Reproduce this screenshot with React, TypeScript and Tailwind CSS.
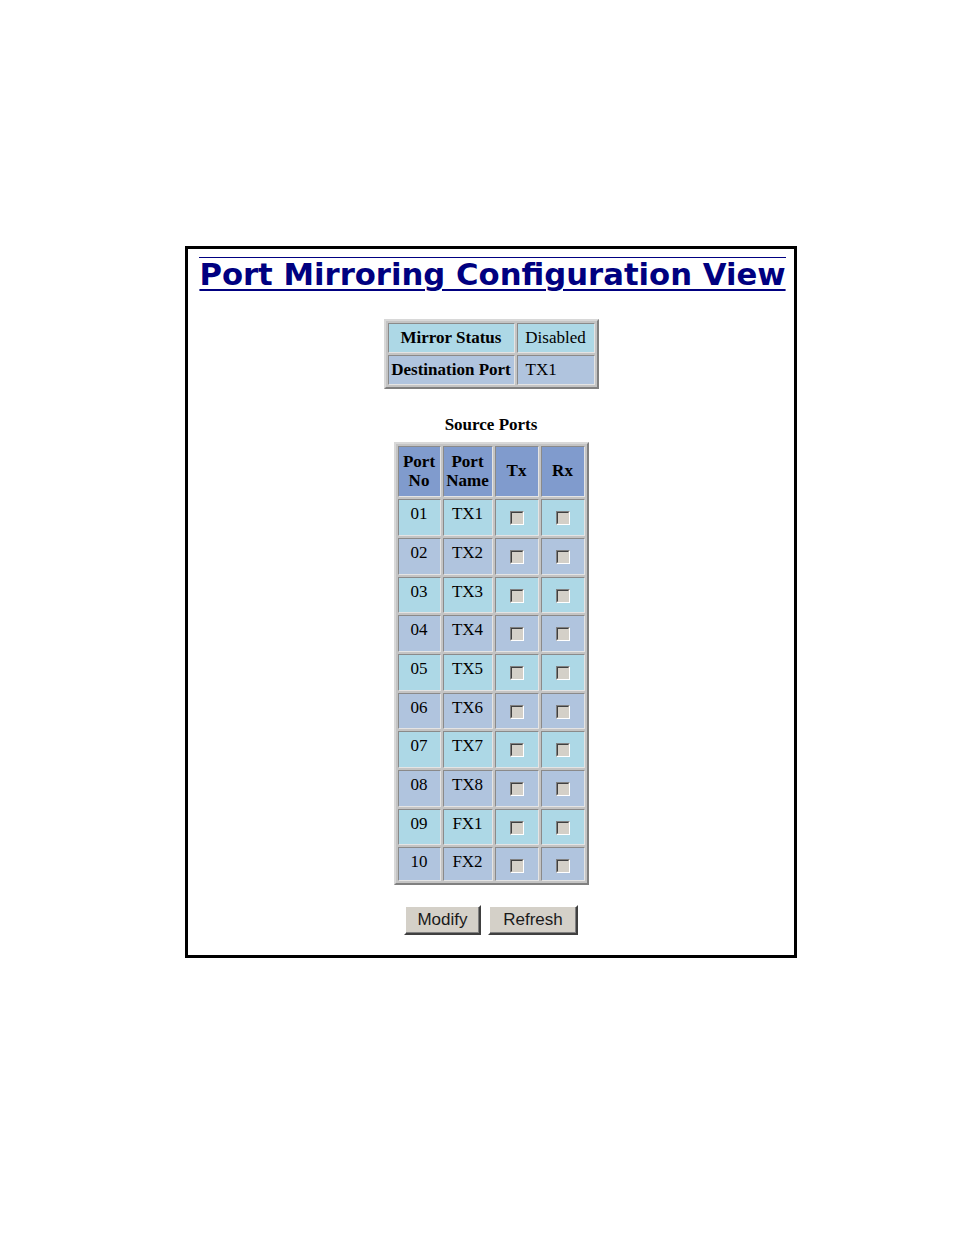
import React from "react";

const serif = { fontFamily: '"Liberation Serif", "Times New Roman", serif' };

function Check() {
  return (
    <span className="inline-block w-[14px] h-[14px] border border-t-[#808080] border-l-[#808080] border-b-white border-r-white align-middle">
      <span className="block w-full h-full border border-t-[#404040] border-l-[#404040] border-b-[#d4d0c8] border-r-[#d4d0c8] bg-[#d4d0c8]" />
    </span>
  );
}

const ports = [
  ["01", "TX1"],
  ["02", "TX2"],
  ["03", "TX3"],
  ["04", "TX4"],
  ["05", "TX5"],
  ["06", "TX6"],
  ["07", "TX7"],
  ["08", "TX8"],
  ["09", "FX1"],
  ["10", "FX2"],
];

const td = "p-0 border border-t-[#8a8a8a] border-l-[#8a8a8a] border-b-[#e4e4e4] border-r-[#e4e4e4]";

export default function App() {
  return (
    <div className="w-[954px] h-[1235px] bg-white pt-[246px] pl-[185px]">
      <div className="w-[612px] h-[712px] border-[3px] border-black flex flex-col items-center">
        <div className="mt-[8px] ml-[3px] border-t border-[#000080] pt-[2px]">
          <div
            className="text-[30.7px] leading-none font-bold text-[#000080] underline decoration-[1.5px] underline-offset-[4px] whitespace-nowrap"
            style={{ fontFamily: '"DejaVu Sans", Verdana, sans-serif' }}
          >
            Port Mirroring Configuration View
          </div>
        </div>

        <table
          className="mt-[28px] border-separate border-spacing-0.5 border-2 border-t-[#d8d8d8] border-l-[#d8d8d8] border-b-[#808080] border-r-[#808080] bg-[#c4c4c4] text-[17px] text-black"
          style={serif}
        >
          <tbody>
            <tr>
              <td className={td}>
                <div className="w-[125px] h-[28px] bg-[#add8e6] flex items-center justify-center font-bold">
                  Mirror Status
                </div>
              </td>
              <td className={td}>
                <div className="w-[76px] h-[28px] bg-[#add8e6] flex items-center justify-center">
                  Disabled
                </div>
              </td>
            </tr>
            <tr>
              <td className={td}>
                <div className="w-[125px] h-[28px] bg-[#b0c4de] flex items-center justify-center font-bold">
                  Destination Port
                </div>
              </td>
              <td className={td}>
                <div className="w-[76px] h-[28px] bg-[#b0c4de] flex items-center pl-[8px]">
                  TX1
                </div>
              </td>
            </tr>
          </tbody>
        </table>

        <div className="mt-[26px] text-[17px] font-bold leading-[20px] text-black" style={serif}>
          Source Ports
        </div>

        <table
          className="mt-[7px] border-separate border-spacing-0.5 border-2 border-t-[#d8d8d8] border-l-[#d8d8d8] border-b-[#808080] border-r-[#808080] bg-[#c4c4c4] text-[17px] text-black"
          style={serif}
        >
          <tbody>
            <tr>
              <td className={td}>
                <div className="w-[41px] h-[49px] bg-[#809bcd] flex flex-col items-center justify-center font-bold leading-[19px]">
                  <span>Port</span>
                  <span>No</span>
                </div>
              </td>
              <td className={td}>
                <div className="w-[48px] h-[49px] bg-[#809bcd] flex flex-col items-center justify-center font-bold leading-[19px]">
                  <span>Port</span>
                  <span>Name</span>
                </div>
              </td>
              <td className={td}>
                <div className="w-[42px] h-[49px] bg-[#809bcd] flex items-center justify-center font-bold">
                  Tx
                </div>
              </td>
              <td className={td}>
                <div className="w-[42px] h-[49px] bg-[#809bcd] flex items-center justify-center font-bold">
                  Rx
                </div>
              </td>
            </tr>
            {ports.map(([no, name], i) => {
              const bg = i % 2 === 0 ? "bg-[#add8e6]" : "bg-[#b0c4de]";
              const h = i === 9 ? "h-[32px]" : i % 3 === 2 ? "h-[34px]" : "h-[35px]";
              return (
                <tr key={no}>
                  <td className={td}>
                    <div className={`w-[41px] ${h} ${bg} flex justify-center pt-[4px] leading-[20px]`}>
                      {no}
                    </div>
                  </td>
                  <td className={td}>
                    <div className={`w-[48px] ${h} ${bg} flex justify-center pt-[4px] leading-[20px]`}>
                      {name}
                    </div>
                  </td>
                  <td className={td}>
                    <div className={`w-[42px] ${h} ${bg} flex justify-center pt-[11px]`}>
                      <Check />
                    </div>
                  </td>
                  <td className={td}>
                    <div className={`w-[42px] ${h} ${bg} flex justify-center pt-[11px]`}>
                      <Check />
                    </div>
                  </td>
                </tr>
              );
            })}
          </tbody>
        </table>

        <div
          className="mt-[20px] flex gap-[7px] text-[17px] text-[#1a1a1a]"
          style={{ fontFamily: '"Liberation Sans", Arial, sans-serif' }}
        >
          <button className="w-[77px] h-[30px] bg-[#d4d0c8] border-2 border-t-white border-l-white border-b-[#404040] border-r-[#404040] shadow-[inset_-1px_-1px_0_#808080] leading-none">
            Modify
          </button>
          <button className="w-[90px] h-[30px] bg-[#d4d0c8] border-2 border-t-white border-l-white border-b-[#404040] border-r-[#404040] shadow-[inset_-1px_-1px_0_#808080] leading-none">
            Refresh
          </button>
        </div>
      </div>
    </div>
  );
}
